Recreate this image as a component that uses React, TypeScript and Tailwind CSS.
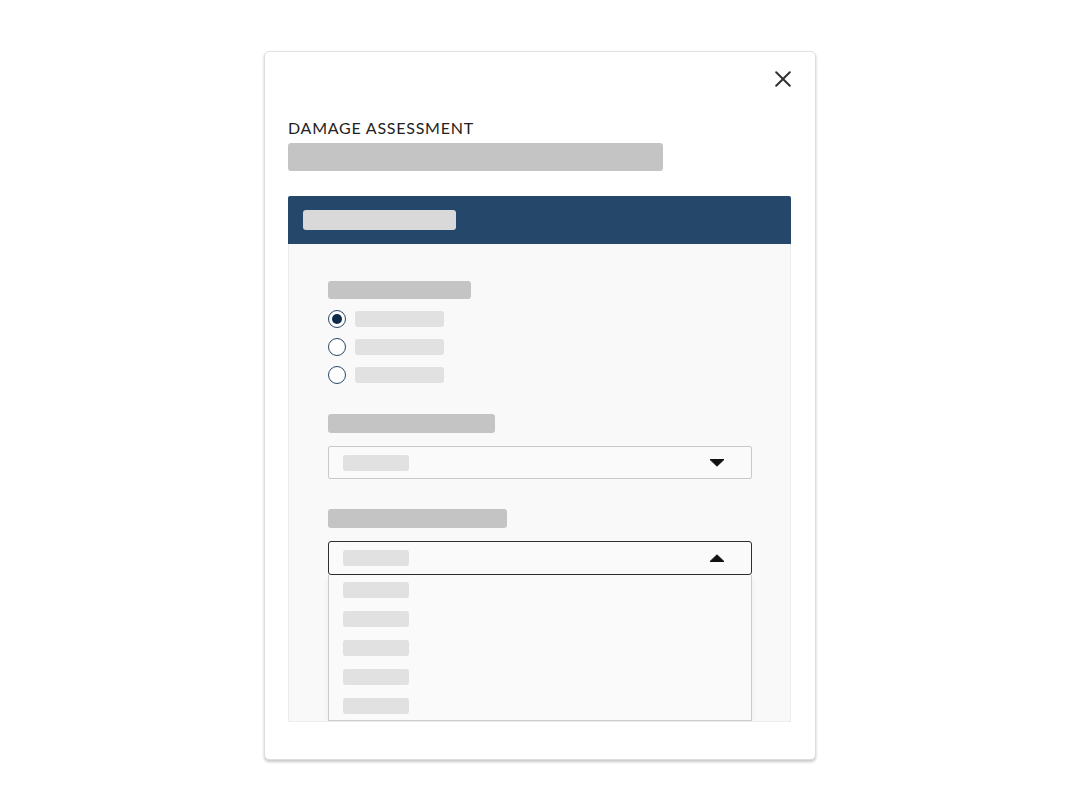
function Bar({ className }: { className: string }) {
  return <div className={`rounded-[3px] ${className}`} />
}

function Radio({ checked }: { checked?: boolean }) {
  return (
    <div className="flex h-[18px] w-[18px] items-center justify-center rounded-full border-[1.5px] border-[#2a4867] bg-white">
      {checked && <div className="h-[10px] w-[10px] rounded-full bg-[#0e2a4a]" />}
    </div>
  )
}

function Caret({ up }: { up?: boolean }) {
  return (
    <svg width="16" height="8" viewBox="0 0 16 8" className="shrink-0">
      {up ? (
        <path d="M1 7.5 L8 0.8 L15 7.5 Z" fill="#111" stroke="#111" strokeWidth="1" strokeLinejoin="round" />
      ) : (
        <path d="M1 0.5 L8 7.2 L15 0.5 Z" fill="#111" stroke="#111" strokeWidth="1" strokeLinejoin="round" />
      )}
    </svg>
  )
}

export default function App() {
  const radios = [true, false, false]
  const options = [0, 1, 2, 3]

  return (
    <div className="flex min-h-screen justify-center bg-white pt-[51px]" style={{ fontFamily: "Lato, 'Open Sans', sans-serif" }}>
      <div className="h-[709px] w-[552px] rounded-[5px] border border-[#dedede] bg-white pl-[23px] pr-[24px] pt-[19px] shadow-[0_2px_3px_rgba(0,0,0,0.22)]">
        {/* Close */}
        <div className="flex justify-end">
          <button type="button" className="flex h-[16px] w-[16px] items-center justify-center" aria-label="Close">
            <svg width="16" height="16" viewBox="0 0 16 16">
              <path d="M1.2 1.2 L14.8 14.8 M14.8 1.2 L1.2 14.8" stroke="#333" strokeWidth="2" strokeLinecap="round" />
            </svg>
          </button>
        </div>

        {/* Title */}
        <h2 className="mt-[31px] text-[16px] leading-[20px] tracking-[0.75px] text-[#222]">DAMAGE ASSESSMENT</h2>
        <Bar className="mt-[5px] h-[28px] w-[375px] bg-[#c4c4c4]" />

        {/* Panel */}
        <div className="mt-[25px] w-full">
          <div className="flex h-[48px] items-center rounded-t-[2px] bg-[#25476a] pl-[15px]">
            <Bar className="h-[20px] w-[153px] bg-[#d9d9d9]" />
          </div>

          <div className="h-[478px] overflow-hidden border-x border-b border-[#ececec] bg-[#f9f9f9] pl-[39px] pt-[37px]">
            <Bar className="h-[18px] w-[143px] bg-[#c4c4c4]" />

            <div className="mt-[6px] flex flex-col">
              {radios.map((checked, i) => (
                <div key={i} className="flex h-[28px] items-center">
                  <Radio checked={checked} />
                  <Bar className="ml-[9px] h-[16px] w-[89px] bg-[#e1e1e1]" />
                </div>
              ))}
            </div>

            <Bar className="mt-[25px] h-[19px] w-[167px] bg-[#c4c4c4]" />
            <div className="mt-[13px] flex h-[33px] w-[424px] items-center justify-between rounded-[2px] border border-[#c9c9c9] bg-[#fafafa] pl-[14px] pr-[26px]">
              <Bar className="h-[16px] w-[66px] bg-[#e1e1e1]" />
              <Caret />
            </div>

            <Bar className="mt-[30px] h-[19px] w-[179px] bg-[#c4c4c4]" />
            <div className="mt-[13px] flex h-[34px] w-[424px] items-center justify-between rounded-[3px] border border-[#2e2e2e] bg-[#fafafa] pl-[14px] pr-[26px]">
              <Bar className="h-[16px] w-[66px] bg-[#e1e1e1]" />
              <Caret up />
            </div>
            <div className="flex w-[424px] flex-col border-x border-b border-[#cdcdcd] bg-[#fafafa] pl-[14px] pt-[7px] shadow-[0_2px_6px_rgba(0,0,0,0.06)]">
              {options.map((o) => (
                <div key={o} className="flex h-[29px] items-start">
                  <Bar className="h-[16px] w-[66px] bg-[#e1e1e1]" />
                </div>
              ))}
              <div className="flex h-[22px] items-start">
                <Bar className="h-[16px] w-[66px] bg-[#e1e1e1]" />
              </div>
            </div>
          </div>
        </div>
      </div>
    </div>
  )
}
